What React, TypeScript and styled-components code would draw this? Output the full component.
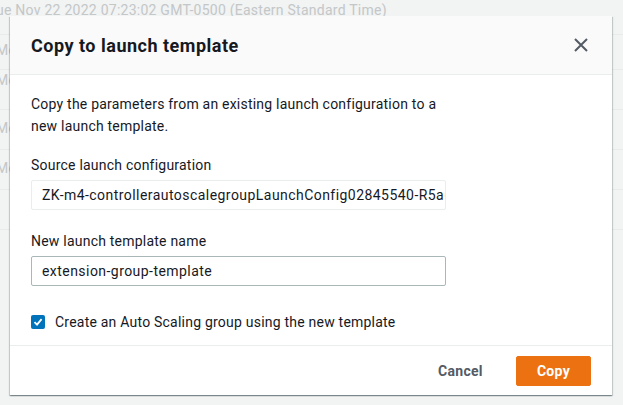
import styled, {createGlobalStyle} from "styled-components";

const GlobalStyle = createGlobalStyle`
	html, body {
		margin: 0;
		padding: 0;
		background: #f2f3f3;
		font-family: Roboto, "Liberation Sans", sans-serif;
		color: #16191f;
	}
	* { box-sizing: border-box; }
`;
const Page = styled.div`
	position: relative;
	width: 623px;
	height: 405px;
	overflow: hidden;
`;
const Backdrop = styled.div`
	display: flex;
	flex-direction: column;
	color: #c3c7c8;
	font-size: 14px;
	line-height: 20px;
	letter-spacing: 0.25px;
`;
const BackRow = styled.div<{h: number; pt: number}>`
	height: ${p => p.h}px;
	padding-top: ${p => p.pt}px;
	margin-left: -4px;
	border-bottom: 1px solid #e9ebeb;
	white-space: nowrap;
`;
const Modal = styled.div`
	position: absolute;
	top: 16px;
	left: 10px;
	width: 602px;
	background: #fff;
	box-shadow: 0 1px 1px rgba(0,28,36,0.3), 1px 1px 1px rgba(0,28,36,0.15), -1px 1px 1px rgba(0,28,36,0.15);
	display: flex;
	flex-direction: column;
`;
const Header = styled.header`
	height: 59px;
	background: #fafafa;
	border-bottom: 1px solid #eaeded;
	display: flex;
	align-items: center;
	justify-content: space-between;
	padding: 0 24px 0 21px;
`;
const Title = styled.h2`
	margin: 0;
	font-size: 18px;
	font-weight: 700;
	letter-spacing: 0.5px;
	color: #16191f;
`;
const Close = styled.button`
	border: 0;
	background: none;
	padding: 0;
	width: 14px;
	height: 14px;
	display: flex;
	color: #545b64;
`;
const Body = styled.div`
	padding: 18px 21px 14px;
	display: flex;
	flex-direction: column;
	font-size: 14px;
	line-height: 22px;
	letter-spacing: 0.22px;
	height: 271px;
	border-bottom: 1px solid #eaeded;
`;
const Description = styled.p`
	margin: 0 0 17px;
	width: 430px;
`;
const Field = styled.div`
	display: flex;
	flex-direction: column;
	gap: 4px;
	margin-bottom: 20px;
`;
const Label = styled.label`
	font-size: 14px;
	color: #16191f;
`;
const Input = styled.div<{readOnly?: boolean}>`
	width: 415px;
	height: 30px;
	border: 1px solid ${p => p.readOnly ? "#eaeded" : "#aab7b8"};
	border-radius: 2px;
	padding: 0 10px;
	display: flex;
	align-items: center;
	white-space: nowrap;
	overflow: hidden;
	font-size: 14px;
	letter-spacing: 0.45px;
	color: #16191f;
`;
const CheckRow = styled.div`
	display: flex;
	align-items: center;
	gap: 10px;
	margin-top: 5px;
`;
const Box = styled.span`
	width: 14px;
	height: 14px;
	border-radius: 2px;
	background: #0073bb;
	display: flex;
	align-items: center;
	justify-content: center;
`;
const Footer = styled.footer`
	height: 49px;
	display: flex;
	align-items: center;
	justify-content: flex-end;
	gap: 12px;
	padding: 0 21px 0 0;
`;
const Button = styled.button<{primary?: boolean}>`
	height: 30px;
	padding: 0 20px;
	border-radius: 2px;
	border: 1px solid ${p => p.primary ? "#ec7211" : "transparent"};
	background: ${p => p.primary ? "#ec7211" : "transparent"};
	color: ${p => p.primary ? "#fff" : "#545b64"};
	font-family: inherit;
	font-size: 14px;
	font-weight: 700;
	letter-spacing: 0.3px;
`;

export default function App(){
	return (
		<Page>
			<GlobalStyle/>
			<Backdrop>
				<BackRow h={35} pt={0}>ue Nov 22 2022 07:23:02 GMT-0500 (Eastern Standard Time)</BackRow>
				<BackRow h={35} pt={5}>Mo</BackRow>
				<BackRow h={40} pt={0}>Mo</BackRow>
				<BackRow h={40} pt={8}>Mo</BackRow>
				<BackRow h={40} pt={8}>Mo</BackRow>
				<BackRow h={40} pt={8}></BackRow>
			</Backdrop>
			<Modal>
				<Header>
					<Title>Copy to launch template</Title>
					<Close aria-label="Close">
						<svg width="14" height="14" viewBox="0 0 14 14">
							<path d="M1 1L13 13M13 1L1 13" stroke="currentColor" strokeWidth="2" fill="none"/>
						</svg>
					</Close>
				</Header>
				<Body>
					<Description>Copy the parameters from an existing launch configuration to a new launch template.</Description>
					<Field>
						<Label>Source launch configuration</Label>
						<Input readOnly>ZK-m4-controllerautoscalegroupLaunchConfig02845540-R5a6JfkT2Q</Input>
					</Field>
					<Field>
						<Label>New launch template name</Label>
						<Input>extension-group-template</Input>
					</Field>
					<CheckRow>
						<Box>
							<svg width="10" height="10" viewBox="0 0 10 10">
								<path d="M1.5 5.2L4 7.6L8.6 2.2" stroke="#fff" strokeWidth="1.8" fill="none"/>
							</svg>
						</Box>
						<span>Create an Auto Scaling group using the new template</span>
					</CheckRow>
				</Body>
				<Footer>
					<Button>Cancel</Button>
					<Button primary>Copy</Button>
				</Footer>
			</Modal>
		</Page>
	);
}
